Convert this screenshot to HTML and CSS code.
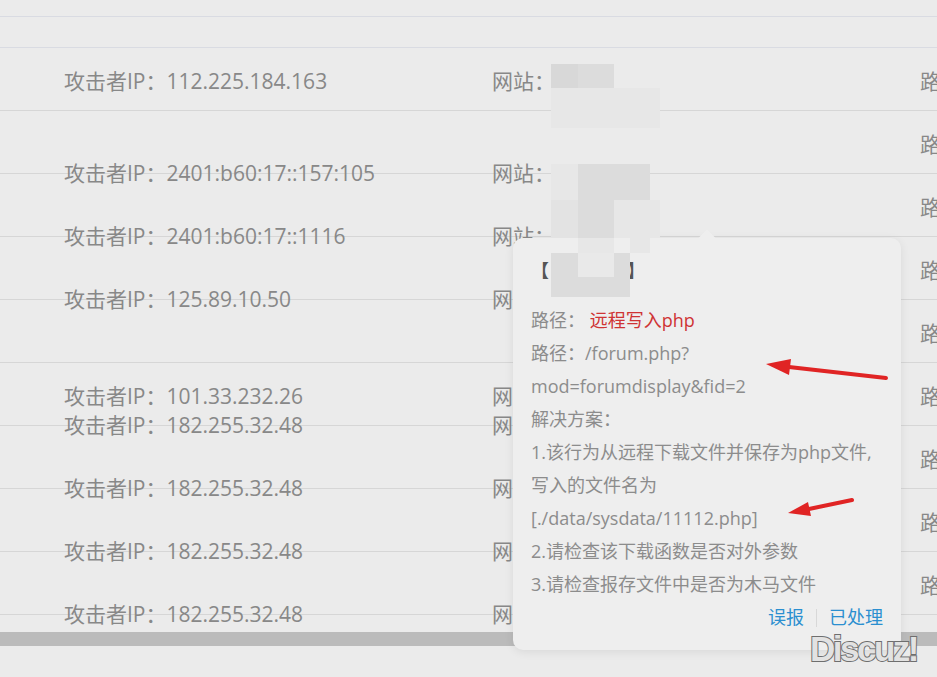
FILE: index.html
```html
<!DOCTYPE html>
<html lang="zh-CN">
<head>
    <meta charset="UTF-8">
    <meta name="viewport" content="width=device-width, initial-scale=1.0">
    <title>攻击日志</title>
    <link rel="stylesheet" href="styles.css">
</head>
<body>
    <div class="page">
        <div class="log-table">
            <div class="top-band"></div>
            <div class="head-band"></div>

            <div class="row">
                <span class="cell ip mid">攻击者IP：112.225.184.163</span>
                <span class="cell site mid">网站：</span>
                <span class="cell path mid">路径：/forum.php</span>
            </div>
            <div class="row">
                <span class="cell ip edge">攻击者IP：2401:b60:17::157:105</span>
                <span class="cell site edge">网站：</span>
                <span class="cell path mid">路径：/forum.php</span>
            </div>
            <div class="row">
                <span class="cell ip edge">攻击者IP：2401:b60:17::1116</span>
                <span class="cell site edge">网站：</span>
                <span class="cell path mid">路径：/forum.php</span>
            </div>
            <div class="row">
                <span class="cell ip edge">攻击者IP：125.89.10.50</span>
                <span class="cell site edge">网站：</span>
                <span class="cell path mid">路径：/forum.php</span>
            </div>
            <div class="row">
                <span class="cell path mid">路径：/forum.php</span>
            </div>
            <div class="row">
                <span class="cell ip mid">攻击者IP：101.33.232.26</span>
                <span class="cell site mid">网站：</span>
                <span class="cell ip edge">攻击者IP：182.255.32.48</span>
                <span class="cell site edge">网站：</span>
                <span class="cell path mid">路径：/forum.php</span>
            </div>
            <div class="row">
                <span class="cell ip edge">攻击者IP：182.255.32.48</span>
                <span class="cell site edge">网站：</span>
                <span class="cell path mid">路径：/forum.php</span>
            </div>
            <div class="row">
                <span class="cell ip edge">攻击者IP：182.255.32.48</span>
                <span class="cell site edge">网站：</span>
                <span class="cell path mid">路径：/forum.php</span>
            </div>
            <div class="row">
                <span class="cell ip edge">攻击者IP：182.255.32.48</span>
                <span class="cell site edge">网站：</span>
                <span class="cell path mid">路径：/forum.php</span>
            </div>
            <div class="row">
                <span class="cell path mid">路径：/forum.php</span>
            </div>
        </div>

        <div class="scrollbar"></div>

        <!-- detail popup for the selected entry -->
        <div class="popup">
            <div class="popup-title">【<span class="title-gap"></span>】</div>
            <div class="line">路径： <span class="danger">远程写入php</span></div>
            <div class="line">路径：/forum.php?</div>
            <div class="line">mod=forumdisplay&amp;fid=2</div>
            <div class="line">解决方案：</div>
            <div class="line">1.该行为从远程下载文件并保存为php文件,</div>
            <div class="line">写入的文件名为</div>
            <div class="line">[./data/sysdata/11112.php]</div>
            <div class="line">2.请检查该下载函数是否对外参数</div>
            <div class="line">3.请检查报存文件中是否为木马文件</div>
            <div class="popup-actions">
                <a href="#" class="action">误报</a>
                <span class="divider"></span>
                <a href="#" class="action">已处理</a>
            </div>
        </div>

        <!-- pixelated (blurred) site names -->
        <div class="mosaic">
            <i class="t1"></i><i class="t2"></i><i></i><i></i><i></i>
            <i class="t4"></i><i class="t4"></i><i class="t4"></i><i class="t4"></i><i class="t4"></i>
            <i></i><i></i><i></i><i></i><i></i>
            <i class="t4"></i><i class="t2"></i><i class="t2"></i><i class="t2"></i><i></i>
            <i class="t3"></i><i class="t2"></i><i class="t4"></i><i class="t4"></i><i class="t4"></i>
            <i></i><i class="t4"></i><i></i><i class="t4"></i><i></i>
            <i class="t2"></i><i class="t5"></i><i class="t2"></i><i></i><i></i>
            <i class="t2"></i><i class="t2"></i><i class="t2"></i><i></i><i></i>
        </div>

        <!-- red annotation arrows -->
        <svg class="marks" width="937" height="677" viewBox="0 0 937 677">
            <line x1="886" y1="378" x2="789" y2="367" stroke="#e02424" stroke-width="4" stroke-linecap="round"/>
            <polygon points="766,364 791,359 789,375" fill="#e02424"/>
            <line x1="852" y1="500" x2="809" y2="509" stroke="#e02424" stroke-width="4" stroke-linecap="round"/>
            <polygon points="788,513 808,502 811,516" fill="#e02424"/>
        </svg>

        <div class="watermark">Discuz!</div>
    </div>
</body>
</html>
```

FILE: styles.css
```css
* {
    box-sizing: border-box;
}

body {
    margin: 0;
    background-color: #ebebeb;
    font-family: "Open Sans", "Noto Sans CJK SC", sans-serif;
    color: #888;
    overflow: hidden;
}

.page {
    position: relative;
    width: 937px;
    height: 677px;
    overflow: hidden;
}

.log-table {
    height: 632px;
    overflow: hidden;
}

.top-band {
    height: 17px;
    border-bottom: 1px solid #d9dbe2;
}

.head-band {
    height: 31px;
    border-bottom: 1px solid #d9dbe2;
}

.row {
    display: grid;
    grid-template-columns: 428px 428px 1fr;
    height: 63px;
    padding-left: 64px;
    border-bottom: 1px solid #d6d6d6;
}

.cell {
    grid-row: 1;
    padding-top: 3px;
    font-size: 21px;
    line-height: 30px;
    white-space: nowrap;
}

.ip {
    grid-column: 1;
}

.site {
    grid-column: 2;
}

.path {
    grid-column: 3;
}

.mid {
    align-self: center;
}

.edge {
    align-self: end;
    transform: translateY(calc(50% - 2px));
}

.scrollbar {
    height: 14px;
    background-color: #bbbbbb;
}

/* popup */
.popup {
    position: absolute;
    left: 513px;
    top: 238px;
    width: 388px;
    height: 412px;
    padding: 16px 18px;
    background-color: #eeeeee;
    border-radius: 10px;
    box-shadow: 0 2px 10px rgba(0, 0, 0, 0.08);
    font-size: 18px;
    color: #8c8c8c;
    z-index: 2;
}

.popup::before {
    content: "";
    position: absolute;
    left: 188px;
    top: -6px;
    width: 12px;
    height: 12px;
    background-color: #eeeeee;
    transform: rotate(45deg);
}

.popup-title {
    line-height: 33px;
    margin-bottom: 17px;
    color: #555;
    font-weight: bold;
    white-space: nowrap;
}

.title-gap {
    display: inline-block;
    width: 78px;
}

.line {
    line-height: 33px;
    white-space: nowrap;
}

.danger {
    color: #cf3434;
}

.popup-actions {
    display: flex;
    justify-content: flex-end;
    align-items: center;
    gap: 12px;
    line-height: 33px;
}

.action {
    color: #2b8fd0;
    text-decoration: none;
}

.divider {
    width: 1px;
    height: 18px;
    background-color: #d8d8d8;
}

/* mosaic */
.mosaic {
    position: absolute;
    left: 551px;
    top: 64px;
    display: grid;
    grid-template-columns: 27px 36px 16px 20px 10px;
    grid-template-rows: 24px 40px 36px 36px 38px 15px 24px 20px;
    z-index: 3;
}

.mosaic .t1 { background-color: #d8d8d8; }
.mosaic .t2 { background-color: #dcdcdc; }
.mosaic .t3 { background-color: #e3e3e3; }
.mosaic .t4 { background-color: #e7e7e7; }
.mosaic .t5 { background-color: #e9e9e9; }

.marks {
    position: absolute;
    left: 0;
    top: 0;
    z-index: 4;
    pointer-events: none;
}

.watermark {
    position: absolute;
    left: 810px;
    top: 629px;
    font-family: "Liberation Sans", Arial, sans-serif;
    font-weight: bold;
    font-size: 35px;
    letter-spacing: -2.5px;
    color: #e2e2e2;
    -webkit-text-stroke: 2px #6e6e6e;
    paint-order: stroke fill;
    z-index: 5;
}
```
